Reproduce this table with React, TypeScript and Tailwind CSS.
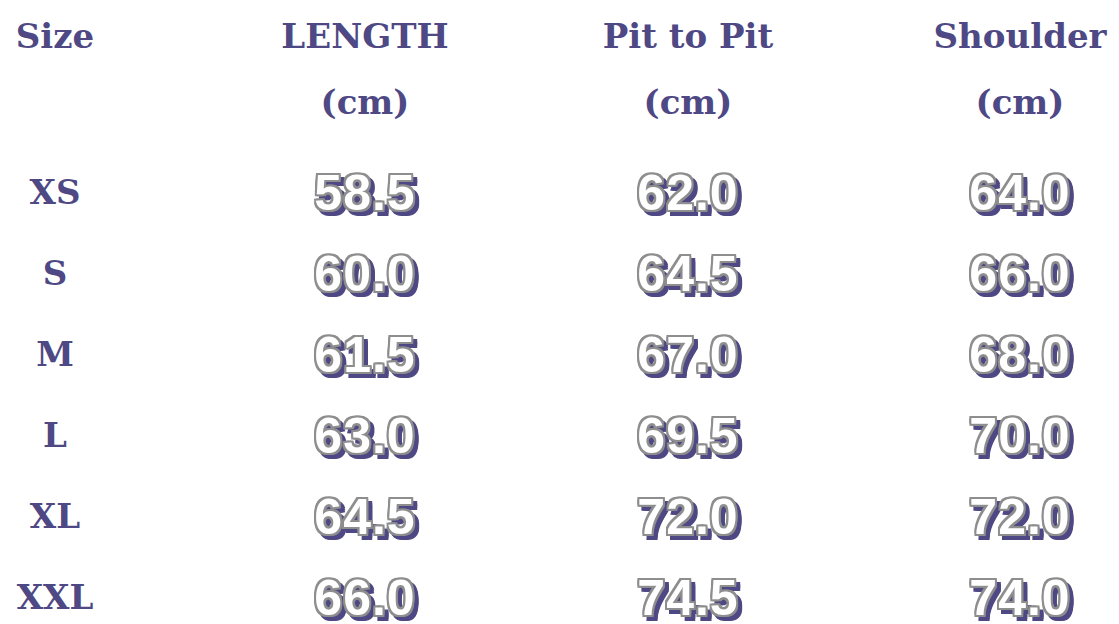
import React from "react";

const rows: [string, string, string, string][] = [
  ["XS", "58.5", "62.0", "64.0"],
  ["S", "60.0", "64.5", "66.0"],
  ["M", "61.5", "67.0", "68.0"],
  ["L", "63.0", "69.5", "70.0"],
  ["XL", "64.5", "72.0", "72.0"],
  ["XXL", "66.0", "74.5", "74.0"],
];

const headFont =
  "font-['DejaVu_Serif','Liberation_Serif',serif] font-bold text-[34px] text-[#4e4884]";

const numCls =
  "font-['Liberation_Sans',Arial,sans-serif] font-bold text-[50px] leading-none text-white tracking-[1px] [text-shadow:2px_0_#8e8e8e,-2px_0_#8e8e8e,0_2px_#8e8e8e,0_-2px_#8e8e8e,2px_2px_#8e8e8e,-2px_-2px_#8e8e8e,2px_-2px_#8e8e8e,-2px_2px_#8e8e8e,4px_4px_#4e4884,6px_6px_#4e4884,6px_4px_#4e4884,4px_6px_#4e4884,6px_2px_#4e4884,2px_6px_#4e4884,5px_5px_#4e4884]";

function Num({ v }: { v: string }) {
  return <span className={numCls}>{v}</span>;
}

export default function App() {
  return (
    <div className="w-[1119px] h-[624px] bg-white overflow-hidden">
      <div className={`flex h-[152px] pt-[3px] leading-[66px] ${headFont}`}>
        <div className="w-[110px] flex justify-center">Size</div>
        <div className="ml-[110px] w-[290px] flex flex-col items-center">
          <span>LENGTH</span>
          <span>(cm)</span>
        </div>
        <div className="w-[356px] flex flex-col items-center">
          <span>Pit to Pit</span>
          <span>(cm)</span>
        </div>
        <div className="ml-[55px] w-[198px] flex flex-col items-center">
          <span>Shoulder</span>
          <span>(cm)</span>
        </div>
      </div>
      {rows.map(([s, a, b, c]) => (
        <div key={s} className="flex h-[81px] items-center">
          <div className={`w-[110px] flex justify-center ${headFont}`}>{s}</div>
          <div className="ml-[110px] w-[290px] flex justify-center">
            <Num v={a} />
          </div>
          <div className="w-[356px] flex justify-center">
            <Num v={b} />
          </div>
          <div className="ml-[55px] w-[198px] flex justify-center">
            <Num v={c} />
          </div>
        </div>
      ))}
    </div>
  );
}
